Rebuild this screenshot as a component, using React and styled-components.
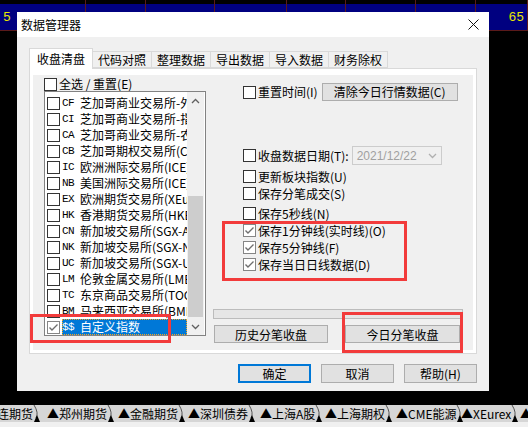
import React from "react";
import styled, { createGlobalStyle } from "styled-components";

const GlobalStyle = createGlobalStyle`
  html, body {
    margin: 0;
    padding: 0;
    background: #000;
  }
  body {
    width: 528px;
    height: 427px;
    overflow: hidden;
    font-family: "Noto Sans CJK SC", "Liberation Sans", sans-serif;
    font-size: 12px;
    color: #000;
  }
`;

const Screen = styled.div`
  position: relative;
  width: 528px;
  height: 427px;
  display: flex;
  flex-direction: column;
  background: #000;
  overflow: hidden;
`;

/* ---------- quote grid behind the dialog ---------- */
const QuoteHead = styled.div`
  height: 4px;
  display: flex;
  background: #000;
`;

const QuoteRow = styled.div`
  height: 26px;
  display: flex;
  background: #000080;
  border-bottom: 1px solid #5a1a1a;
`;

const QuoteCell = styled.div`
  width: ${(p) => p.$w}px;
  flex-shrink: 0;
  box-sizing: border-box;
  border-right: 1px solid #5a1a1a;
  color: #e8e800;
  font-family: "Liberation Mono", monospace;
  font-size: 13px;
  line-height: 18px;
  padding-top: 5px;
  text-align: ${(p) => p.$align || "left"};
  padding-left: 3px;
  padding-right: 3px;
`;

const HeadCell = styled.div`
  width: ${(p) => p.$w}px;
  flex-shrink: 0;
  box-sizing: border-box;
  border-right: 1px solid #5a1a1a;
`;

const Desk = styled.div`
  flex: 1;
`;

/* ---------- status bar ---------- */
const StatusBar = styled.div`
  height: 17px;
  display: flex;
  align-items: stretch;
  background: #d6d6d6;
  margin-left: -24px;
`;

const StatusTab = styled.div`
  width: ${(p) => p.$w}px;
  flex-shrink: 0;
  display: flex;
  align-items: center;
  justify-content: space-between;
  white-space: nowrap;
  font-size: 12px;
  line-height: 17px;
  padding-left: 9px;
  box-sizing: border-box;
`;

const Sep = styled.svg`
  width: 10px;
  height: 17px;
  flex-shrink: 0;
`;

const BottomStrip = styled.div`
  height: 5px;
  background: #f0f0f0;
`;

/* ---------- dialog window ---------- */
const Dialog = styled.div`
  position: absolute;
  left: 17px;
  top: 12px;
  width: 472px;
  height: 379px;
  background: #f0f0f0;
  display: flex;
  flex-direction: column;
`;

const TitleBar = styled.div`
  height: 25px;
  background: #fff;
  display: flex;
  align-items: center;
  justify-content: space-between;
  padding: 0 10px 0 4px;
  font-size: 12px;
`;

const DialogBody = styled.div`
  flex: 1;
  padding: 11px 12px 0 12px;
  display: flex;
  flex-direction: column;
`;

const TabStrip = styled.div`
  display: flex;
  align-items: flex-end;
  height: 20px;
`;

const Tab = styled.div`
  box-sizing: border-box;
  height: ${(p) => (p.$active ? 21 : 17)}px;
  padding: 0 ${(p) => (p.$active ? 7 : 5)}px;
  margin-bottom: ${(p) => (p.$active ? -1 : 0)}px;
  background: ${(p) => (p.$active ? "#fff" : "#f0f0f0")};
  border: 1px solid #d9d9d9;
  border-bottom: ${(p) => (p.$active ? "none" : "1px solid #d9d9d9")};
  margin-left: -1px;
  font-size: 12px;
  line-height: ${(p) => (p.$active ? 19 : 15)}px;
  position: relative;
  z-index: ${(p) => (p.$active ? 1 : 0)};
  &:first-child {
    margin-left: 0;
  }
`;

const TabPanel = styled.div`
  height: 286px;
  box-sizing: border-box;
  border: 1px solid #d9d9d9;
  background: #fff;
  padding: 6px 3px 3px 3px;
  display: flex;
`;

const Page = styled.div`
  flex: 1;
  background: #f0f0f0;
  display: flex;
  padding: 2px 0 0 11px;
  gap: 7px;
`;

const LeftCol = styled.div`
  width: 162px;
  display: flex;
  flex-direction: column;
`;

const RightCol = styled.div`
  width: 250px;
  display: flex;
  flex-direction: column;
`;

/* ---------- checkbox ---------- */
const Box = styled.span`
  width: 13px;
  height: 13px;
  box-sizing: border-box;
  flex-shrink: 0;
  border: 1px solid ${(p) => (p.$checked ? "#858585" : "#333")};
  background: #fff;
  display: inline-flex;
  align-items: center;
  justify-content: center;
`;

function CheckBox({ checked }) {
  return (
    <Box $checked={checked}>
      {checked && (
        <svg width="11" height="11" viewBox="0 0 11 11">
          <polyline
            points="1.5,5.5 4,8 9.5,2.5"
            fill="none"
            stroke="#6e6e6e"
            strokeWidth="1.4"
          />
        </svg>
      )}
    </Box>
  );
}

const CheckRow = styled.div`
  display: flex;
  align-items: center;
  height: ${(p) => p.$h || 17}px;
  margin-top: ${(p) => p.$mt || 0}px;
  padding-left: ${(p) => p.$indent || 0}px;
  gap: 2px;
  white-space: nowrap;
  font-size: 12px;
  line-height: 14px;
`;

/* ---------- exchange list ---------- */
const ListBox = styled.div`
  height: 245px;
  box-sizing: border-box;
  border: 1px solid #828282;
  background: #fff;
  display: flex;
`;

const ListItems = styled.div`
  width: 142px;
  overflow: hidden;
  padding-top: 3px;
`;

const Item = styled.div`
  height: 16px;
  display: flex;
  align-items: center;
  padding-left: 2px;
  gap: 2px;
  white-space: nowrap;
`;

const ItemLabel = styled.div`
  flex: 1;
  display: flex;
  align-items: center;
  height: 16px;
  box-sizing: border-box;
  background: ${(p) => (p.$selected ? "#0078d7" : "transparent")};
  color: ${(p) => (p.$selected ? "#fff" : "#000")};
  outline: ${(p) => (p.$selected ? "1px dotted #f5a623" : "none")};
  outline-offset: -1px;
  font-size: 12px;
  line-height: 16px;
  overflow: hidden;
`;

const Code = styled.span`
  width: 18px;
  flex-shrink: 0;
  font-family: "Liberation Mono", monospace;
  font-size: 11px;
  letter-spacing: -0.6px;
`;

const ScrollBar = styled.div`
  width: 17px;
  background: #f0f0f0;
  display: flex;
  flex-direction: column;
  align-items: center;
`;

const ScrollArrow = styled.div`
  height: 17px;
  width: 17px;
  display: flex;
  align-items: center;
  justify-content: center;
`;

const ScrollTrack = styled.div`
  flex: 1;
  width: 17px;
  display: flex;
  flex-direction: column;
  justify-content: flex-end;
`;

const ScrollThumb = styled.div`
  height: 121px;
  margin: 0 1px 1px 1px;
  background: #cdcdcd;
`;

/* ---------- buttons and controls ---------- */
const Button = styled.div`
  box-sizing: border-box;
  width: ${(p) => p.$w}px;
  height: ${(p) => p.$h || 19}px;
  margin-left: ${(p) => p.$ml || 0}px;
  background: #e1e1e1;
  border: ${(p) => (p.$default ? "2px solid #0078d7" : "1px solid #adadad")};
  display: flex;
  align-items: center;
  justify-content: center;
  font-size: 12px;
  white-space: nowrap;
`;

const DatePicker = styled.div`
  box-sizing: border-box;
  width: 90px;
  height: 19px;
  margin-left: 1px;
  border: 1px solid #cccccc;
  background: #f0f0f0;
  display: flex;
  align-items: center;
  justify-content: space-between;
  padding: 0 4px 0 4px;
  color: #a0a0a0;
  font-family: "Liberation Sans", sans-serif;
  font-size: 12px;
`;

const Progress = styled.div`
  height: 10px;
  box-sizing: border-box;
  border: 1px solid #bcbcbc;
  background: #e6e6e6;
  margin-top: ${(p) => p.$mt}px;
`;

const ButtonRow = styled.div`
  display: flex;
  gap: ${(p) => p.$gap}px;
  margin-top: ${(p) => p.$mt || 0}px;
  padding-left: ${(p) => p.$pl || 0}px;
  justify-content: ${(p) => p.$justify || "flex-start"};
`;

/* ---------- red annotation marks laid over the screenshot ---------- */
const Mark = styled.div`
  position: absolute;
  box-sizing: border-box;
  left: ${(p) => p.$x}px;
  top: ${(p) => p.$y}px;
  width: ${(p) => p.$w}px;
  height: ${(p) => p.$h}px;
  border: 3px solid #f23b3b;
  pointer-events: none;
`;

const exchanges = [
  ["CF", "芝加哥商业交易所-外汇"],
  ["CI", "芝加哥商业交易所-指数"],
  ["CA", "芝加哥商业交易所-农产品"],
  ["CB", "芝加哥期权交易所(CBOE)"],
  ["IC", "欧洲洲际交易所(ICE)"],
  ["NB", "美国洲际交易所(ICE)"],
  ["EX", "欧洲期货交易所(XEurex)"],
  ["HK", "香港期货交易所(HKEX)"],
  ["CN", "新加坡交易所(SGX-A)"],
  ["NK", "新加坡交易所(SGX-N)"],
  ["UC", "新加坡交易所(SGX-U)"],
  ["LM", "伦敦金属交易所(LME)"],
  ["TC", "东京商品交易所(TOCOM)"],
  ["BM", "马来西亚交易所(BMD)"],
  ["$$", "自定义指数", true],
];

const tabs = ["收盘清盘", "代码对照", "整理数据", "导出数据", "导入数据", "财务除权"];

const markets = [
  ["大连期货", 62],
  ["▲郑州期货", 71],
  ["▲金融期货", 70],
  ["▲深圳债券", 72],
  ["▲上海A股", 65],
  ["▲上海期权", 71],
  ["▲CME能源", 65],
  ["▲XEurex", 59],
  ["▲上海黄金", 70],
];

const gridCols = [86, 60, 69, 72, 59, 70, 60, 52];

function Chevron({ up, color = "#606060" }) {
  return (
    <svg width="9" height="6" viewBox="0 0 9 6">
      <polyline
        points={up ? "1,5 4.5,1.5 8,5" : "1,1 4.5,4.5 8,1"}
        fill="none"
        stroke={color}
        strokeWidth="1.3"
      />
    </svg>
  );
}

export default function App() {
  return (
    <>
      <GlobalStyle />
      <Screen>
        <QuoteHead>
          {gridCols.map((w, i) => (
            <HeadCell key={i} $w={w} />
          ))}
        </QuoteHead>
        <QuoteRow>
          {gridCols.map((w, i) => (
            <QuoteCell key={i} $w={w} $align={i === gridCols.length - 1 ? "right" : "left"}>
              {i === 0 ? "5" : i === gridCols.length - 1 ? "65" : ""}
            </QuoteCell>
          ))}
        </QuoteRow>
        <Desk />
        <StatusBar>
          {markets.map(([name, w]) => (
            <StatusTab key={name} $w={w}>
              <span>{name}</span>
              <Sep viewBox="0 0 10 17">
                <path d="M1,0 Q6,8 3,13" fill="none" stroke="#555" strokeWidth="1" />
                <polygon points="1,17 4,10 7,17" fill="#000" />
              </Sep>
            </StatusTab>
          ))}
        </StatusBar>
        <BottomStrip />

        <Dialog>
          <TitleBar>
            <span>数据管理器</span>
            <svg width="11" height="11" viewBox="0 0 11 11">
              <path d="M0.5,0.5 L10.5,10.5 M10.5,0.5 L0.5,10.5" stroke="#111" strokeWidth="1" />
            </svg>
          </TitleBar>
          <DialogBody>
            <TabStrip>
              {tabs.map((t, i) => (
                <Tab key={t} $active={i === 0}>
                  {t}
                </Tab>
              ))}
            </TabStrip>
            <TabPanel>
              <Page>
                <LeftCol>
                  <CheckRow $h={14}>
                    <CheckBox />
                    <span>全选 / 重置(E)</span>
                  </CheckRow>
                  <ListBox>
                    <ListItems>
                      {exchanges.map(([code, name, sel]) => (
                        <Item key={code}>
                          <CheckBox checked={!!sel} />
                          <ItemLabel $selected={sel}>
                            <Code>{code}</Code>
                            <span>{name}</span>
                          </ItemLabel>
                        </Item>
                      ))}
                    </ListItems>
                    <ScrollBar>
                      <ScrollArrow>
                        <Chevron up />
                      </ScrollArrow>
                      <ScrollTrack>
                        <ScrollThumb />
                      </ScrollTrack>
                      <ScrollArrow>
                        <Chevron />
                      </ScrollArrow>
                    </ScrollBar>
                  </ListBox>
                </LeftCol>

                <RightCol>
                  <CheckRow $h={18} $mt={6} $indent={30}>
                    <CheckBox />
                    <span>重置时间(I)</span>
                    <Button $w={136} $h={18} $ml={2}>
                      清除今日行情数据(C)
                    </Button>
                  </CheckRow>
                  <CheckRow $h={19} $mt={45} $indent={30}>
                    <CheckBox />
                    <span>收盘数据日期(T):</span>
                    <DatePicker>
                      <span>2021/12/22</span>
                      <Chevron color="#b0b0b0" />
                    </DatePicker>
                  </CheckRow>
                  <CheckRow $mt={3} $indent={30}>
                    <CheckBox />
                    <span>更新板块指数(U)</span>
                  </CheckRow>
                  <CheckRow $indent={30}>
                    <CheckBox />
                    <span>保存分笔成交(S)</span>
                  </CheckRow>
                  <CheckRow $mt={3} $indent={30}>
                    <CheckBox />
                    <span>保存5秒线(N)</span>
                  </CheckRow>
                  <CheckRow $indent={30}>
                    <CheckBox checked />
                    <span>保存1分钟线(实时线)(O)</span>
                  </CheckRow>
                  <CheckRow $indent={30}>
                    <CheckBox checked />
                    <span>保存5分钟线(F)</span>
                  </CheckRow>
                  <CheckRow $indent={30}>
                    <CheckBox checked />
                    <span>保存当日日线数据(D)</span>
                  </CheckRow>
                  <Progress $mt={36} />
                  <ButtonRow $gap={17} $mt={6} $pl={1}>
                    <Button $w={114} $h={18}>
                      历史分笔收盘
                    </Button>
                    <Button $w={115} $h={18}>
                      今日分笔收盘
                    </Button>
                  </ButtonRow>
                </RightCol>
              </Page>
            </TabPanel>
            <ButtonRow $gap={10} $mt={10} $justify="flex-end">
              <Button $w={73} $default>
                确定
              </Button>
              <Button $w={73}>取消</Button>
              <Button $w={73}>帮助(H)</Button>
            </ButtonRow>
          </DialogBody>
        </Dialog>

        <Mark $x={30} $y={314} $w={141} $h={29} />
        <Mark $x={222} $y={221} $w={185} $h={60} />
        <Mark $x={342} $y={312} $w={121} $h={41} />
      </Screen>
    </>
  );
}
